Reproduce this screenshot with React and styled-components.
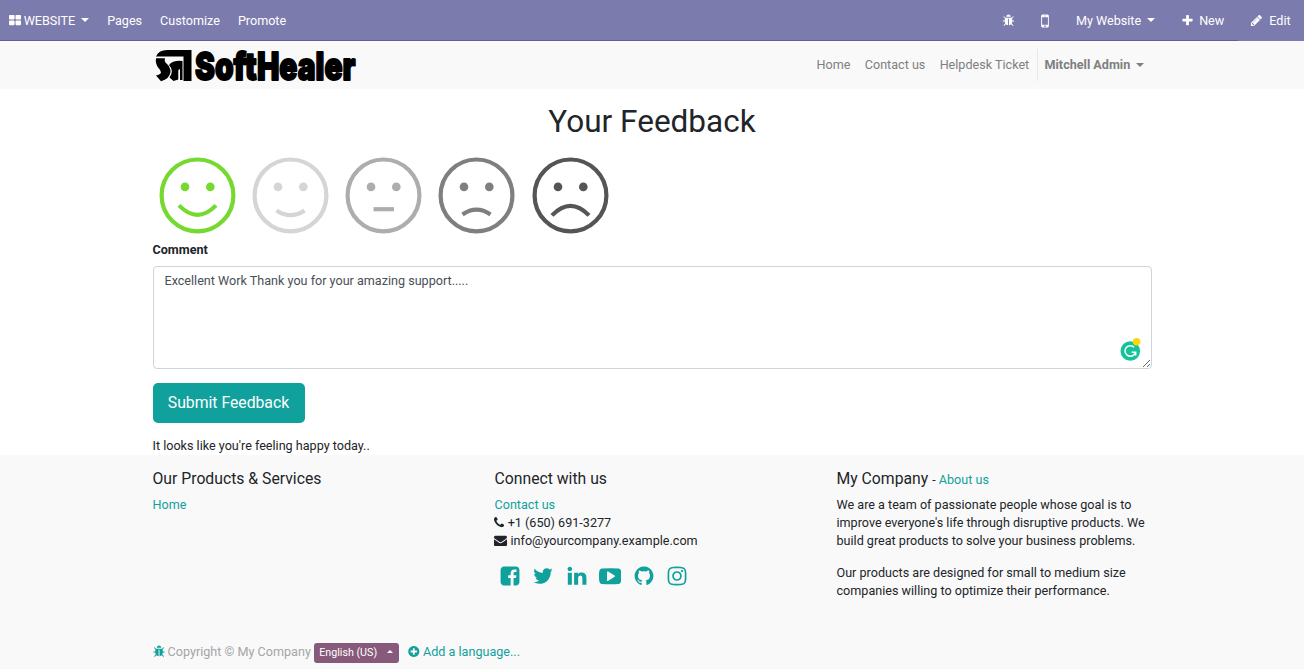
import React from "react";
import styled, { createGlobalStyle } from "styled-components";

const TEAL = "#10a19d";

const GlobalStyle = createGlobalStyle`
  *, *::before, *::after { box-sizing: border-box; }
  html, body { margin: 0; padding: 0; overflow: hidden; height: 100%; }
  body {
    font-family: Roboto, "Noto Sans", sans-serif;
    font-size: 12.6px;
    line-height: 18px;
    color: #212529;
    background: #fff;
  }
  a { color: ${TEAL}; text-decoration: none; }
`;

const ICONS = {
  bug: "M1696 960q0 26-19 45t-45 19h-224q0 171-67 290l208 209q19 19 19 45t-19 45q-18 19-45 19t-45-19l-198-197q-5 5-15 13t-42 28.5-65 36.5-82 29-97 13v-896h-128v896q-51 0-101.5-13.5t-87-33-66-39-43.5-32.5l-15-14-183 207q-20 21-48 21-24 0-43-16-19-18-20.5-44.5t15.5-46.5l202-227q-58-114-58-274h-224q-26 0-45-19t-19-45 19-45 45-19h224v-294l-173-173q-19-19-19-45t19-45 45-19 45 19l173 173h844l173-173q19-19 45-19t45 19 19 45-19 45l-173 173v294h224q26 0 45 19t19 45zm-480-576h-640q0-133 93.5-226.5t226.5-93.5 226.5 93.5 93.5 226.5z",
  grid: "M832 1024v384q0 52-38 90t-90 38h-512q-52 0-90-38t-38-90v-384q0-52 38-90t90-38h512q52 0 90 38t38 90zm0-768v384q0 52-38 90t-90 38h-512q-52 0-90-38t-38-90v-384q0-52 38-90t90-38h512q52 0 90 38t38 90zm896 768v384q0 52-38 90t-90 38h-512q-52 0-90-38t-38-90v-384q0-52 38-90t90-38h512q52 0 90 38t38 90zm0-768v384q0 52-38 90t-90 38h-512q-52 0-90-38t-38-90v-384q0-52 38-90t90-38h512q52 0 90 38t38 90z",
  mobile: "M976 1408q0-33-23.5-56.5t-56.5-23.5-56.5 23.5-23.5 56.5 23.5 56.5 56.5 23.5 56.5-23.5 23.5-56.5zm208-160v-704q0-13-9.5-22.5t-22.5-9.5h-512q-13 0-22.5 9.5t-9.5 22.5v704q0 13 9.5 22.5t22.5 9.5h512q13 0 22.5-9.5t9.5-22.5zm-192-848q0-16-16-16h-160q-16 0-16 16t16 16h160q16 0 16-16zm288-16v1024q0 52-38 90t-90 38h-512q-52 0-90-38t-38-90v-1024q0-52 38-90t90-38h512q52 0 90 38t38 90z",
  plus: "M1600 736v192q0 40-28 68t-68 28h-416v416q0 40-28 68t-68 28h-192q-40 0-68-28t-28-68v-416h-416q-40 0-68-28t-28-68v-192q0-40 28-68t68-28h416v-416q0-40 28-68t68-28h192q40 0 68 28t28 68v416h416q40 0 68 28t28 68z",
  pencil: "M491 1536l91-91-235-235-91 91v107h128v128h107zm523-928q0-22-22-22-10 0-17 7l-542 542q-7 7-7 17 0 22 22 22 10 0 17-7l542-542q7-7 7-17zm-54-192l416 416-832 832h-416v-416zm683 96q0 53-37 90l-166 166-416-416 166-165q36-38 90-38 53 0 91 38l235 234q37 39 37 91z",
  phone: "M1600 1240q0 27-10 70.5t-21 68.5q-21 50-122 106-94 51-186 51-27 0-53-3.5t-57.5-12.5-47-14.5-55.5-20.5-49-18q-98-35-175-83-127-79-264-216t-216-264q-48-77-83-175-3-9-18-49t-20.5-55.5-14.5-47-12.5-57.5-3.5-53q0-92 51-186 56-101 106-122 25-11 68.5-21t70.5-10q14 0 21 3 18 6 53 76 11 19 30 54t35 63.5 31 53.5q3 4 17.5 25t21.5 35.5 7 28.5q0 20-28.5 50t-62 55-62 53-28.5 46q0 9 5 22.5t8.5 20.5 14 24 11.5 19q76 137 174 235t235 174q2 1 19 11.5t24 14 20.5 8.5 22.5 5q18 0 46-28.5t53-62 55-62 50-28.5q14 0 28.5 7t35.5 21.5 25 17.5q25 15 53.5 31t63.5 35 54 30q70 35 76 53 3 7 3 21z",
  envelope: "M1792 710v794q0 66-47 113t-113 47h-1472q-66 0-113-47t-47-113v-794q44 49 101 87 362 246 497 345 57 42 92.5 65.5t94.5 48 110 24.5h2q51 0 110-24.5t94.5-48 92.5-65.5q170-123 498-345 57-39 100-87zm0-294q0 79-49 151t-122 123q-376 261-468 325-10 7-42.5 31t-54 38-52 32.5-57.5 27-50 9h-2q-23 0-50-9t-57.5-27-52-32.5-54-38-42.5-31q-91-64-262-182.5t-205-142.5q-62-42-117-115.5t-55-136.5q0-78 41.5-130t118.5-52h1472q65 0 112.5 47t47.5 113z",
  facebook: "M1376 128q119 0 203.5 84.5t84.5 203.5v960q0 119-84.5 203.5t-203.5 84.5h-188v-595h199l30-232h-229v-148q0-56 23.5-84t91.5-28l122-1v-207q-63-9-178-9-136 0-217.5 80t-81.5 226v171h-200v232h200v595h-532q-119 0-203.5-84.5t-84.5-203.5v-960q0-119 84.5-203.5t203.5-84.5h960z",
  twitter: "M1684 408q-67 98-162 167 1 14 1 42 0 130-38 259.5t-115.5 248.5-184.5 210.5-258 146-323 54.5q-271 0-496-145 35 4 78 4 225 0 401-138-105-2-188-64.5t-114-159.5q33 5 61 5 43 0 85-11-112-23-185.5-111.5t-73.5-205.5v-4q68 38 146 41-66-44-105-115t-39-154q0-88 44-163 121 149 294.5 238.5t371.5 99.5q-8-38-8-74 0-134 94.5-228.5t228.5-94.5q140 0 236 102 109-21 205-78-37 115-142 178 93-10 186-50z",
  linkedin: "M477 625v991h-330v-991h330zm21-306q1 73-50.5 122t-135.5 49h-2q-82 0-132-49t-50-122q0-74 51.5-122.5t134.5-48.5 133 48.5 51 122.5zm1166 729v568h-329v-530q0-105-40.5-164.5t-126.5-59.5q-63 0-105.5 34.5t-63.5 85.5q-11 30-11 81v553h-329q2-399 2-647t-1-296l-1-48h329v144h-2q20-32 41-56t56.5-52 87-43.5 114.5-15.5q171 0 275 113.5t104 332.5z",
  youtube: "M1280 896q0-37-30-54l-512-320q-31-20-65-2-33 18-33 56v640q0 38 33 56 16 8 31 8 20 0 34-10l512-320q30-17 30-54zm512 0q0 96-1 150t-8.5 136.5-22.5 147.5q-16 73-69 123t-124 58q-222 25-671 25t-671-25q-71-8-124.5-58t-69.5-123q-14-65-21.5-147.5t-8.5-136.5-1-150 1-150 8.5-136.5 22.5-147.5q16-73 69-123t124-58q222-25 671-25t671 25q71 8 124.5 58t69.5 123q14 65 21.5 147.5t8.5 136.5 1 150z",
  github: "M896 128q209 0 385.5 103t279.5 279.5 103 385.5q0 251-146.5 451.5t-378.5 277.5q-27 5-40-7t-13-30q0-3 .5-76.5t.5-134.5q0-97-52-142 57-6 102.5-18t94-39 81-66.5 53-105 20.5-150.5q0-119-79-206 37-91-8-204-28-9-81 11t-92 44l-38 24q-93-26-192-26t-192 26q-16-11-42.5-27t-83.5-38.5-85-13.5q-45 113-8 204-79 87-79 206 0 85 20.5 150t52.5 105 80.5 67 94 39 102.5 18q-39 36-49 103-21 10-45 15t-57 5-65.5-21.5-55.5-62.5q-19-32-48.5-52t-49.5-24l-20-3q-21 0-29 4.5t-5 11.5 9 14 13 12l7 5q22 10 43.5 38t31.5 51l10 23q13 38 44 61.5t67 30 69.5 7 55.5-3.5l23-4q0 38 .5 88.5t.5 54.5q0 18-13 30t-40 7q-232-77-378.5-277.5t-146.5-451.5q0-209 103-385.5t279.5-279.5 385.5-103z",
  instagram: "M1152 896q0-106-75-181t-181-75-181 75-75 181 75 181 181 75 181-75 75-181zm138 0q0 164-115 279t-279 115-279-115-115-279 115-279 279-115 279 115 115 279zm108-410q0 38-27 65t-65 27-65-27-27-65 27-65 65-27 65 27 27 65zm-502-220q-7 0-76.5-.5t-105.5 0-96.5 3-103 10-71.5 18.5q-50 20-88 58t-58 88q-11 29-18.5 71.5t-10 103-3 96.5 0 105.5.5 76.5-.5 76.5 0 105.5 3 96.5 10 103 18.5 71.5q20 50 58 88t88 58q29 11 71.5 18.5t103 10 96.5 3 105.5 0 76.5-.5 76.5.5 105.5 0 96.5-3 103-10 71.5-18.5q50-20 88-58t58-88q11-29 18.5-71.5t10-103 3-96.5 0-105.5-.5-76.5.5-76.5 0-105.5-3-96.5-10-103-18.5-71.5q-20-50-58-88t-88-58q-29-11-71.5-18.5t-103-10-96.5-3-105.5 0-76.5.5zm768 630q0 229-5 317-10 208-124 322t-322 124q-88 5-317 5t-317-5q-208-10-322-124t-124-322q-5-88-5-317t5-317q10-208 124-322t322-124q88-5 317-5t317 5q208 10 322 124t124 322q5 88 5 317z",
  plusCircle: "M1344 960v-128q0-26-19-45t-45-19h-256v-256q0-26-19-45t-45-19h-128q-26 0-45 19t-19 45v256h-256q-26 0-45 19t-19 45v128q0 26 19 45t45 19h256v256q0 26 19 45t45 19h128q26 0 45-19t19-45v-256h256q26 0 45-19t19-45zm320-64q0 209-103 385.5t-279.5 279.5-385.5 103-385.5-103-279.5-279.5-103-385.5 103-385.5 279.5-279.5 385.5-103 385.5 103 279.5 279.5 103 385.5z",
};

const Glyph = styled.svg`
  flex: none;
  display: block;
  fill: currentColor;
  margin-bottom: ${(p) => p.$lift || 0}px;
`;

const Icon = ({ name, size = 13, crop = 0, lift = 0 }) => (
  <Glyph
    $lift={lift}
    width={size * (1 - (2 * crop) / 1792)}
    height={size}
    viewBox={`${crop} 0 ${1792 - 2 * crop} 1792`}
  >
    <path d={ICONS[name]} />
  </Glyph>
);

const Caret = styled.span`
  flex: none;
  border: 4px solid transparent;
  border-width: ${(p) => (p.$up ? "0 3px 3px" : "4px 4px 0")};
  border-${(p) => (p.$up ? "bottom" : "top")}-color: currentColor;
  margin-left: ${(p) => p.$gap || 6}px;
  margin-bottom: ${(p) => (p.$up ? 2 : 1)}px;
`;

const TopBar = styled.nav`
  display: flex;
  justify-content: space-between;
  height: 41px;
  padding: 0 13.4px 0 9px;
  background: linear-gradient(#5f5e97, #5f5e97) 0 100% / 1238px 1px no-repeat #7c7bad;
  color: #fff;
`;

const BarGroup = styled.div`
  display: flex;
  align-items: center;
  height: 41px;
`;

const BarItem = styled.div`
  display: flex;
  align-items: center;
  gap: ${(p) => p.$gap || 0}px;
  margin-left: ${(p) => p.$left || 0}px;
  white-space: nowrap;
`;

const SiteHeader = styled.header`
  height: 48px;
  background: #f9f9f9;
`;

const Container = styled.div`
  width: 999px;
  margin: 0 auto;
`;

const HeaderRow = styled(Container)`
  display: flex;
  justify-content: space-between;
  align-items: center;
  height: 48px;
`;

const Logo = styled.svg`
  display: block;
  margin-left: 2px;
  overflow: visible;
`;

const LogoName = styled.text`
  font-family: Inter, Roboto, sans-serif;
  font-weight: 900;
  stroke: #000;
  stroke-width: 1.8px;
  stroke-linejoin: round;
`;

const Menu = styled.div`
  display: flex;
  align-items: center;
  gap: 14.3px;
  color: #7f7f7f;
  padding-right: 7.3px;
`;

const UserMenu = styled.div`
  display: flex;
  align-items: center;
  height: 32px;
  margin-left: -7px;
  padding-left: 7px;
  border-left: 1px solid #e8e8e8;
  font-weight: 700;
`;

const Main = styled.main`
  height: 366px;
`;

const Title = styled.h1`
  margin: 0;
  padding-top: 13px;
  font-size: 31.5px;
  font-weight: 400;
  line-height: 39px;
  text-align: center;
`;

const Faces = styled.div`
  display: flex;
  gap: 16.2px;
  margin: 16px 0 0 6.3px;
`;

const Label = styled.label`
  display: block;
  margin-top: 7px;
  font-weight: 700;
`;

const CommentBox = styled.div`
  position: relative;
  height: 103px;
  margin-top: 7px;
`;

const CommentInput = styled.textarea`
  display: block;
  width: 100%;
  height: 103px;
  padding: 5px 11px;
  border: 1px solid #ced4da;
  border-radius: 4px;
  background: #fff;
  color: #495057;
  font: inherit;
  outline: none;
  resize: vertical;
`;

const AssistantBadge = styled.svg`
  position: absolute;
  right: 11px;
  top: 71px;
`;

const SubmitButton = styled.button`
  display: block;
  width: 152px;
  height: 40px;
  margin: 14px 0;
  padding: 0 0 1px;
  border: 0;
  border-radius: 5px;
  background: ${TEAL};
  color: #fff;
  font-family: inherit;
  font-size: 15.75px;
`;

const Mood = styled.p`
  margin: 0;
`;

const Footer = styled.footer`
  height: 214px;
  background: #f9f9f9;
`;

const Columns = styled(Container)`
  display: grid;
  grid-template-columns: 316px 316px 316px;
  column-gap: 26px;
  height: 188px;
  padding-top: 14px;
`;

const ColumnTitle = styled.h4`
  display: flex;
  align-items: baseline;
  height: 19px;
  margin: 0 0 8px;
  font-size: 15.75px;
  font-weight: 400;
  line-height: 19px;
  white-space: nowrap;
`;

const TitleNote = styled.span`
  margin-left: 4px;
  font-size: 12.6px;
`;

const ContactLine = styled.div`
  display: flex;
  align-items: center;
  gap: 3.4px;
  height: 18px;

  svg {
    margin-left: -0.4px;
  }
`;

const SocialRow = styled.div`
  display: flex;
  align-items: center;
  gap: 11.5px;
  margin: 15px 0 0 4px;
  color: ${TEAL};
`;

const Paragraph = styled.p`
  margin: 0 0 14px;
  white-space: nowrap;
`;

const BottomRow = styled(Container)`
  display: flex;
  align-items: flex-start;
  line-height: 18px;
  color: #a5a6a7;
`;

const BottomItem = styled.span`
  display: flex;
  align-items: center;
  gap: 3px;
  height: 18px;
  color: ${(p) => (p.$link ? TEAL : "inherit")};
`;

const LanguageButton = styled.button`
  display: flex;
  align-items: center;
  width: 85px;
  height: 20px;
  margin: 0 9.6px 0 3px;
  padding: 0 0 1px 5.4px;
  border: 0;
  border-radius: 3px;
  background: #875a7b;
  color: #fff;
  font-family: inherit;
  font-size: 10.7px;
`;

const FACES = [
  { color: "#76d92f", mouth: "M19.5 48Q38 67 56.5 48" },
  { color: "#d5d5d5", mouth: "M24 53Q38 62.5 52 53" },
  { color: "#adadad", mouth: "M28 51.8H48.5" },
  { color: "#7f7f7f", mouth: "M24 57Q38 47.5 52 57" },
  { color: "#555555", mouth: "M19.5 58Q38 39 56.5 58" },
];

const Face = ({ color, mouth }) => (
  <svg width="77" height="77" viewBox="-0.5 -0.4 77 77" fill="none" stroke={color} strokeWidth="4.2">
    <circle cx="38" cy="38" r="35.9" />
    <path d={mouth} />
    <circle cx="25.5" cy="29.5" r="4.3" fill={color} stroke="none" />
    <circle cx="50.8" cy="29.5" r="4.3" fill={color} stroke="none" />
  </svg>
);

const BrandLogo = () => (
  <Logo width="202" height="34" viewBox="0 0 202 34">
    <path d="M1 8.4Q4 2 12 2H36.5V33H28.5V8.4Z" />
    <path d="M1 10.2H10Q9 13.5 11.5 15.5Q15.5 19 15.5 24Q14.5 31 6 33.2L1 27.5Q5.5 26.5 6 24.5Q6 22.5 3.5 20Q0 15.5 1 10.2Z" />
    <path d="M14 17Q18 12 27.5 13V32H25V21.5Q23.5 20.5 23.3 23V31.5L18.5 33L14.5 29.5Q19.5 23 14 17Z" />
    <LogoName x="40" y="31.5" fontSize="38" textLength="160.5" lengthAdjust="spacingAndGlyphs">
      SoftHealer
    </LogoName>
  </Logo>
);

export default function App() {
  return (
    <>
      <GlobalStyle />
      <TopBar>
        <BarGroup>
          <BarItem $gap={2.6}>
            <Icon name="grid" crop={64} lift={1} />
            WEBSITE
            <Caret $gap={3} />
          </BarItem>
          <BarItem $left={18.3}>Pages</BarItem>
          <BarItem $left={18}>Customize</BarItem>
          <BarItem $left={18}>Promote</BarItem>
        </BarGroup>
        <BarGroup>
          <BarItem><Icon name="bug" lift={1} /></BarItem>
          <BarItem $left={20.8}><Icon name="mobile" size={18} /></BarItem>
          <BarItem $left={22}>
            My Website
            <Caret />
          </BarItem>
          <BarItem $left={25.4} $gap={5.6}>
            <Icon name="plus" lift={1} />
            New
          </BarItem>
          <BarItem $left={26} $gap={6}>
            <Icon name="pencil" />
            Edit
          </BarItem>
        </BarGroup>
      </TopBar>

      <SiteHeader>
        <HeaderRow>
          <BrandLogo />
          <Menu>
            <span>Home</span>
            <span>Contact us</span>
            <span>Helpdesk Ticket</span>
            <UserMenu>
              Mitchell Admin
              <Caret />
            </UserMenu>
          </Menu>
        </HeaderRow>
      </SiteHeader>

      <Main>
        <Container>
          <Title>Your Feedback</Title>
          <Faces>
            {FACES.map((face) => (
              <Face key={face.color} {...face} />
            ))}
          </Faces>
          <Label htmlFor="comment">Comment</Label>
          <CommentBox>
            <CommentInput
              id="comment"
              spellCheck={false}
              defaultValue="Excellent Work Thank you for your amazing support....."
            />
            <AssistantBadge width="22" height="24" viewBox="0 0 22 24">
              <circle cx="11.3" cy="14" r="9.8" fill="#15c39a" />
              <path
                d="M15.1 10.2A5.3 5.3 0 1 0 16.5 15.2H12.6M16.7 14.6V18.6"
                fill="none"
                stroke="#fff"
                strokeWidth="1.5"
              />
              <circle cx="17.6" cy="4.8" r="3.8" fill="#ffd60a" />
            </AssistantBadge>
          </CommentBox>
          <SubmitButton>Submit Feedback</SubmitButton>
          <Mood>It looks like you're feeling happy today..</Mood>
        </Container>
      </Main>

      <Footer>
        <Columns>
          <section>
            <ColumnTitle>Our Products &amp; Services</ColumnTitle>
            <a href="#home">Home</a>
          </section>
          <section>
            <ColumnTitle>Connect with us</ColumnTitle>
            <ContactLine><a href="#contact">Contact us</a></ContactLine>
            <ContactLine>
              <Icon name="phone" crop={192} lift={2} />
              +1 (650) 691-3277
            </ContactLine>
            <ContactLine>
              <Icon name="envelope" lift={2} />
              info@yourcompany.example.com
            </ContactLine>
            <SocialRow>
              <Icon name="facebook" size={22} />
              <Icon name="twitter" size={22} />
              <Icon name="linkedin" size={22} />
              <Icon name="youtube" size={22.4} />
              <Icon name="github" size={22} />
              <Icon name="instagram" size={22} />
            </SocialRow>
          </section>
          <section>
            <ColumnTitle>
              My Company
              <TitleNote>
                - <a href="#about">About us</a>
              </TitleNote>
            </ColumnTitle>
            <Paragraph>
              We are a team of passionate people whose goal is to
              <br />
              improve everyone's life through disruptive products. We
              <br />
              build great products to solve your business problems.
            </Paragraph>
            <Paragraph>
              Our products are designed for small to medium size
              <br />
              companies willing to optimize their performance.
            </Paragraph>
          </section>
        </Columns>
        <BottomRow>
          <BottomItem>
            <BottomItem $link><Icon name="bug" crop={64} lift={2} /></BottomItem>
            Copyright © My Company
          </BottomItem>
          <LanguageButton>
            English (US)
            <Caret $up $gap={10} />
          </LanguageButton>
          <BottomItem $link>
            <Icon name="plusCircle" crop={96} lift={2} />
            Add a language...
          </BottomItem>
        </BottomRow>
      </Footer>
    </>
  );
}
